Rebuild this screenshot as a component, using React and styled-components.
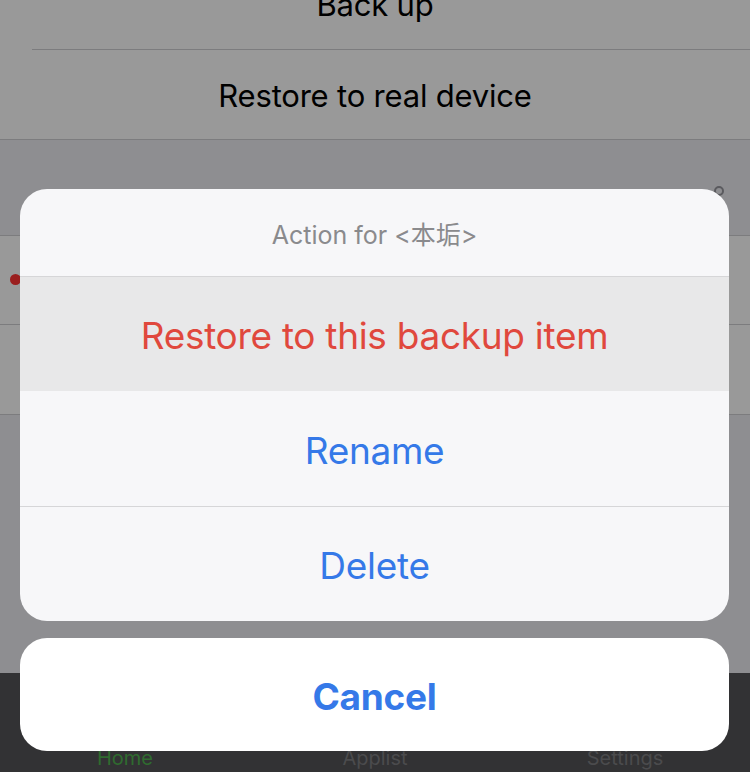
import styled, { createGlobalStyle } from "styled-components";

const GlobalStyle = createGlobalStyle`
    html, body {
        margin: 0;
        padding: 0;
        background: #8e8e91;
    }

    * {
        box-sizing: border-box;
    }
`;

const Screen = styled.div`
    position: relative;
    width: 750px;
    height: 772px;
    overflow: hidden;
    display: flex;
    flex-direction: column;
    background: #8e8e91;
    font-family: Inter, "Noto Sans CJK SC", sans-serif;
`;

const ListGroup = styled.div`
    display: flex;
    flex-direction: column;
    background: #999999;
    border-top: ${props => props.$borderTop ? "1px solid #7c7c7e" : "none"};
    border-bottom: 1px solid #7c7c7e;
    margin-top: ${props => props.$offset || "0"};
`;

const ListRow = styled.div`
    position: relative;
    height: ${props => props.$height || "89px"};
    display: flex;
    align-items: center;
    justify-content: center;
    padding-top: ${props => props.$nudge || "0"};
    font-size: 31px;
    color: #000;
    letter-spacing: -0.2px;
`;

const Separator = styled.div`
    height: 1px;
    margin-left: ${props => props.$inset || "0"};
    background: #7c7c7e;
`;

const Gap = styled.div`
    height: 95px;
    display: flex;
    justify-content: flex-end;
    padding: 46px 26px 0 0;
`;

const Filler = styled.div`
    flex: 1;
`;

const HiddenIcon = styled.span`
    width: 10px;
    height: 10px;
    border-radius: 50%;
    border: 2px solid #5a5a5e;
`;

const RedDot = styled.span`
    position: absolute;
    left: 10px;
    top: 38px;
    width: 11px;
    height: 11px;
    border-radius: 50%;
    background: #9a1e1e;
`;

const TabBar = styled.div`
    height: 99px;
    background: #323234;
    display: grid;
    grid-template-columns: repeat(3, 1fr);
    align-items: end;
    padding-bottom: 2px;
`;

const TabLabel = styled.span`
    text-align: center;
    font-size: 20px;
    color: ${props => props.$active ? "#2f6b2f" : "#4b4b4d"};
`;

const Overlay = styled.div`
    position: absolute;
    inset: 0;
    display: flex;
    flex-direction: column;
    justify-content: flex-end;
    gap: 17px;
    padding: 0 21px 21px 20px;
`;

const SheetGroup = styled.div`
    display: flex;
    flex-direction: column;
    border-radius: 27px;
    overflow: hidden;
    background: #f7f7f9;
`;

const SheetTitle = styled.div`
    height: 88px;
    display: flex;
    align-items: center;
    justify-content: center;
    font-size: 25px;
    color: #8a8a8d;
    border-bottom: 1px solid #d6d6d8;
`;

const SheetButton = styled.div`
    height: ${props => props.$height || "115px"};
    display: flex;
    align-items: center;
    justify-content: center;
    padding-top: 3px;
    font-size: 37px;
    font-weight: ${props => props.$bold ? 700 : 400};
    color: ${props => props.$destructive ? "#e0483d" : "#3579e8"};
    background: ${props => props.$pressed ? "#e8e8e9" : "transparent"};
    border-top: ${props => props.$divider ? "1px solid #d6d6d8" : "none"};
    letter-spacing: -0.3px;
`;

const CancelGroup = styled(SheetGroup)`
    background: #ffffff;
`;

export default function App() {
    return (
        <Screen>
            <GlobalStyle />

            <ListGroup $offset="-40px">
                <ListRow>Back up</ListRow>
                <Separator $inset="32px" />
                <ListRow $nudge="2px">Restore to real device</ListRow>
            </ListGroup>

            <Gap>
                <HiddenIcon />
            </Gap>

            <ListGroup $borderTop>
                <ListRow $height="88px"><RedDot /></ListRow>
                <Separator />
                <ListRow $height="89px" />
            </ListGroup>

            <Filler />

            <TabBar>
                <TabLabel $active>Home</TabLabel>
                <TabLabel>Applist</TabLabel>
                <TabLabel>Settings</TabLabel>
            </TabBar>

            <Overlay>
                <SheetGroup>
                    <SheetTitle>Action for &lt;本垢&gt;</SheetTitle>
                    <SheetButton $destructive $pressed $height="114px">Restore to this backup item</SheetButton>
                    <SheetButton>Rename</SheetButton>
                    <SheetButton $divider $height="115px">Delete</SheetButton>
                </SheetGroup>
                <CancelGroup>
                    <SheetButton $bold $height="113px">Cancel</SheetButton>
                </CancelGroup>
            </Overlay>
        </Screen>
    );
}
